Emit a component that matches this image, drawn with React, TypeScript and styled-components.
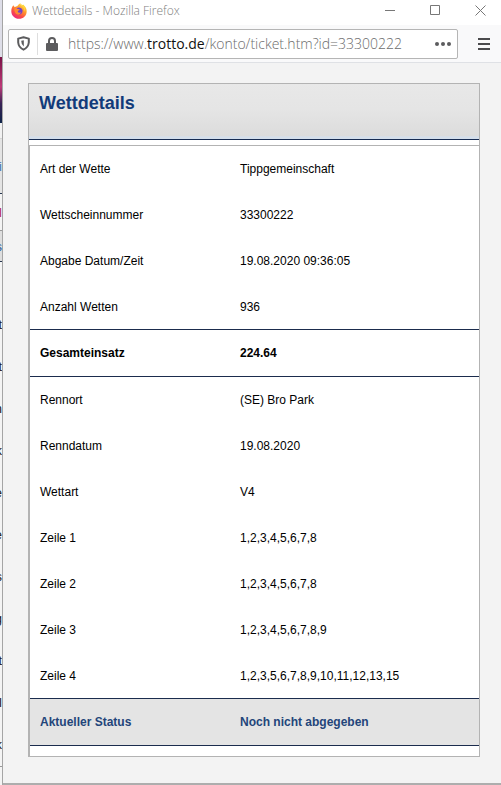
import React from "react";
import styled, { createGlobalStyle } from "styled-components";

const Global = createGlobalStyle`
  * { box-sizing: border-box; }
  body { margin: 0; background: #f3f3f3; font-family: "Liberation Sans", Arial, sans-serif; }
  button, input { font: inherit; }
`;

const Desktop = styled.div`
  display: grid;
  grid-template-columns: 3px minmax(0, 1fr);
  min-height: 100vh;
`;

const Behind = styled.aside`
  overflow: hidden;
  border-right: 1px solid #a5a5a5;
  background: #f4f4f4;
  font-size: 13px;
`;

const Strip = styled.div<{ $h: number; $bg?: string; $color?: string; $line?: string }>`
  display: flex;
  align-items: center;
  justify-content: flex-end;
  height: ${(p) => p.$h}px;
  background: ${(p) => p.$bg ?? "transparent"};
  color: ${(p) => p.$color ?? "#222"};
  border-bottom: ${(p) => (p.$line ? `1px solid ${p.$line}` : "0")};
`;

const Window = styled.div`
  display: flex;
  flex-direction: column;
  min-height: 100vh;
  background: #f3f3f3;
  border-bottom: 2px solid #adadad;
`;

const TitleBar = styled.header`
  display: flex;
  align-items: center;
  height: 25px;
  padding: 0 15px 4px 8px;
  background: #fff;
  color: #808080;
  font: 300 12px/16px "Open Sans", "Noto Sans", sans-serif;
`;

const WindowTitle = styled.span`
  flex: 1;
  margin-left: 5px;
  white-space: nowrap;
`;

const Controls = styled.div`
  display: flex;
  gap: 34px;
`;

const IconButton = styled.button`
  display: flex;
  align-items: center;
  justify-content: center;
  padding: 0;
  border: 0;
  background: none;
  color: #777;
`;

const Toolbar = styled.nav`
  display: flex;
  align-items: center;
  gap: 20px;
  height: 38px;
  padding: 0 11px 0 5px;
  background: #f9f9fa;
  border-bottom: 1px solid #dfe1e5;
`;

const AddressBar = styled.div`
  display: flex;
  flex: 1;
  align-items: center;
  height: 30px;
  padding: 0 6px 0 8px;
  border: 1px solid #b5b5b5;
  border-radius: 2px;
  background: #fff;
  color: #5c5c5e;
`;

const Divider = styled.span`
  width: 1px;
  height: 22px;
  margin: 0 8px 0 7px;
  background: #dedede;
`;

const Address = styled.a`
  flex: 1;
  margin-left: 10px;
  color: #6c6c6c;
  font: 300 14px/20px "Open Sans", "Noto Sans", sans-serif;
  text-decoration: none;
  white-space: nowrap;
`;

const Host = styled.span`
  color: #111;
  font-weight: 400;
`;

const Page = styled.main`
  flex: 1;
  padding: 20px 21px 26px 25px;
`;

const Panel = styled.section`
  border: 1px solid #b3b3b3;
  background: #fff;
`;

const PanelHeader = styled.div`
  height: 56px;
  padding: 8px 10px;
  background: linear-gradient(#e8e8e8 0, #e5e5e5 45%, #dcdcdc 94%, #d5dfeb 96%);
  border-bottom: 1px solid #172c52;
`;

const Heading = styled.h1`
  margin: 0;
  color: #123b7a;
  font-size: 18px;
  line-height: 22px;
`;

const Details = styled.div`
  margin-top: 5px;
  padding-bottom: 10px;
  border-top: 1px solid #b3b3b3;
  border-left: 1px solid #b3b3b3;
`;

const Table = styled.table`
  width: 100%;
  table-layout: fixed;
  border-collapse: separate;
  border-spacing: 0;
  color: #111;
  font-size: 12px;
  line-height: 16px;
  text-align: left;
`;

const LabelColumn = styled.col`
  width: 200px;
`;

type Kind = "plain" | "last" | "total" | "status";

const Row = styled.tr<{ $kind: Kind }>`
  height: ${(p) => ({ plain: 46, last: 45, total: 48, status: 48 })[p.$kind]}px;
  background: ${(p) => (p.$kind === "status" ? "#e4e4e4" : "#fff")};
  color: ${(p) => (p.$kind === "status" ? "#23457a" : "#000")};
  font-weight: ${(p) => (p.$kind === "total" || p.$kind === "status" ? 700 : 400)};

  th, td {
    padding: 0 0 0 10px;
    font-weight: inherit;
    border: 0 solid #1b2c4d;
    border-width: ${(p) => (p.$kind === "total" || p.$kind === "status" ? "1px 0" : "0")};
  }
`;

const rows: [string, string, Kind][] = [
  ["Art der Wette", "Tippgemeinschaft", "plain"],
  ["Wettscheinnummer", "33300222", "plain"],
  ["Abgabe Datum/Zeit", "19.08.2020 09:36:05", "plain"],
  ["Anzahl Wetten", "936", "last"],
  ["Gesamteinsatz", "224.64", "total"],
  ["Rennort", "(SE) Bro Park", "plain"],
  ["Renndatum", "19.08.2020", "plain"],
  ["Wettart", "V4", "plain"],
  ["Zeile 1", "1,2,3,4,5,6,7,8", "plain"],
  ["Zeile 2", "1,2,3,4,5,6,7,8", "plain"],
  ["Zeile 3", "1,2,3,4,5,6,7,8,9", "plain"],
  ["Zeile 4", "1,2,3,5,6,7,8,9,10,11,12,13,15", "last"],
  ["Aktueller Status", "Noch nicht abgegeben", "status"],
];

const behindLetters = ["t", "t", "n", "k", "e", "e", "s", "g", "t", "l", "k"];

const FirefoxLogo = () => (
  <svg width="16" height="16" viewBox="0 0 16 16" aria-hidden="true">
    <defs>
      <linearGradient id="flame" x1="0.8" y1="0.05" x2="0.2" y2="0.95">
        <stop offset="0" stopColor="#ffe14a" />
        <stop offset="0.35" stopColor="#ff9a2b" />
        <stop offset="0.7" stopColor="#fb4a48" />
        <stop offset="1" stopColor="#e8257e" />
      </linearGradient>
    </defs>
    <path d="M2.2 2.3 3.8 4.2Q5 3.1 6.2 3.2 7 1.6 9.2.3 9.1 1.7 10.6 2.5L12.3 1.7Q15.8 4.4 15.7 8.4C15.6 12.8 12.2 15.8 8 15.8 3.6 15.8.3 12.4.3 8.2.3 5.4 1.3 4 2.2 2.3Z" fill="url(#flame)" />
    <path d="M5 6.2Q7.1 3.5 10.3 5.3 12.3 6.8 11.4 9.2 10.3 11.8 7.6 11.5 4.5 11 4.4 7.8Z" fill="#7440c9" />
    <path d="M3.2 5.4Q5.4 4.4 6.6 6L8.7 6.3Q8.7 7.3 7 7.8 6.4 9 7.4 9.6 8.9 9.9 10 9.1 9.2 12 6.6 11.6 3.5 10.6 3.2 5.4Z" fill="#ff8a31" />
    <path d="M9.2.3Q9.1 1.7 11 3 13.8 5.2 13.3 9 15.2 5 12.3 1.7 11 2.4 9.2.3Z" fill="#ffd83b" />
  </svg>
);

export default function App() {
  return (
    <>
      <Global />
      <Desktop>
        <Behind aria-hidden="true">
          <Strip $h={57} $bg="#dedee8" />
          <Strip $h={66} $bg="linear-gradient(#7a1246, #bd3a78 45%, #3b2457 70%, #0d2348)" />
          <Strip $h={16} $bg="#f1f1f1" $line="#d5d5d5" />
          <Strip $h={55} $bg="#e4e4e4" $color="#3b76b5" $line="#26364f">i</Strip>
          <Strip $h={37} $color="#b0295c" $line="#999">l</Strip>
          <Strip $h={31} $bg="#dedede" $color="#27609c" $line="#26364f">s</Strip>
          <Strip $h={41} />
          {behindLetters.map((letter, i) => (
            <Strip key={i} $h={42}>{letter}</Strip>
          ))}
          <Strip $h={2} $line="#999" />
        </Behind>
        <Window>
          <TitleBar>
            <FirefoxLogo />
            <WindowTitle>Wettdetails - Mozilla Firefox</WindowTitle>
            <Controls>
              <IconButton aria-label="Minimieren">
                <svg width="11" height="11" viewBox="0 0 11 11" stroke="currentColor"><path d="M0 5.5h10" /></svg>
              </IconButton>
              <IconButton aria-label="Maximieren">
                <svg width="11" height="11" viewBox="0 0 11 11" fill="none" stroke="currentColor"><path d="M.5.5h9v9h-9z" /></svg>
              </IconButton>
              <IconButton aria-label="Schließen">
                <svg width="11" height="11" viewBox="0 0 11 11" stroke="currentColor"><path d="m.5.5 10 10m0-10-10 10" /></svg>
              </IconButton>
            </Controls>
          </TitleBar>
          <Toolbar>
            <AddressBar>
              <IconButton aria-label="Schutz">
                <svg width="13" height="15" viewBox="0 0 13 15" fill="none" stroke="#5c5c5e" strokeWidth="2">
                  <path d="M6.5 1.2 11.8 2.6V6.5Q11.3 11.5 6.5 13.7 1.7 11.5 1.2 6.5V2.6Z" strokeLinejoin="round" />
                  <path d="M6.8 4.2V10.4Q4.2 8.7 4.2 4.8Z" fill="#5c5c5e" stroke="none" />
                </svg>
              </IconButton>
              <Divider />
              <IconButton aria-label="Verbindung sicher">
                <svg width="12" height="14" viewBox="0 0 12 14" fill="none">
                  <path d="M3 7V4a3 3 0 0 1 6 0v3" stroke="#5c5c5e" strokeWidth="2" />
                  <rect y="6" width="12" height="8" rx="1" fill="#5c5c5e" />
                </svg>
              </IconButton>
              <Address href="#ticket">
                https://www.<Host>trotto.de</Host>/konto/ticket.htm?id=33300222
              </Address>
              <IconButton aria-label="Seitenaktionen">
                <svg width="16" height="4" viewBox="0 0 16 4" fill="#5c5c5e">
                  <circle cx="2" cy="2" r="2" /><circle cx="8" cy="2" r="2" /><circle cx="14" cy="2" r="2" />
                </svg>
              </IconButton>
            </AddressBar>
            <IconButton aria-label="Menü">
              <svg width="12" height="12" viewBox="0 0 12 12" stroke="#4a4a4c" strokeWidth="2"><path d="M0 1h12M0 6h12M0 11h12" /></svg>
            </IconButton>
          </Toolbar>
          <Page>
            <Panel>
              <PanelHeader><Heading>Wettdetails</Heading></PanelHeader>
              <Details>
                <Table>
                  <colgroup><LabelColumn /><col /></colgroup>
                  <tbody>
                    {rows.map(([label, value, kind]) => (
                      <Row key={label} $kind={kind}>
                        <th scope="row">{label}</th>
                        <td>{value}</td>
                      </Row>
                    ))}
                  </tbody>
                </Table>
              </Details>
            </Panel>
          </Page>
        </Window>
      </Desktop>
    </>
  );
}
